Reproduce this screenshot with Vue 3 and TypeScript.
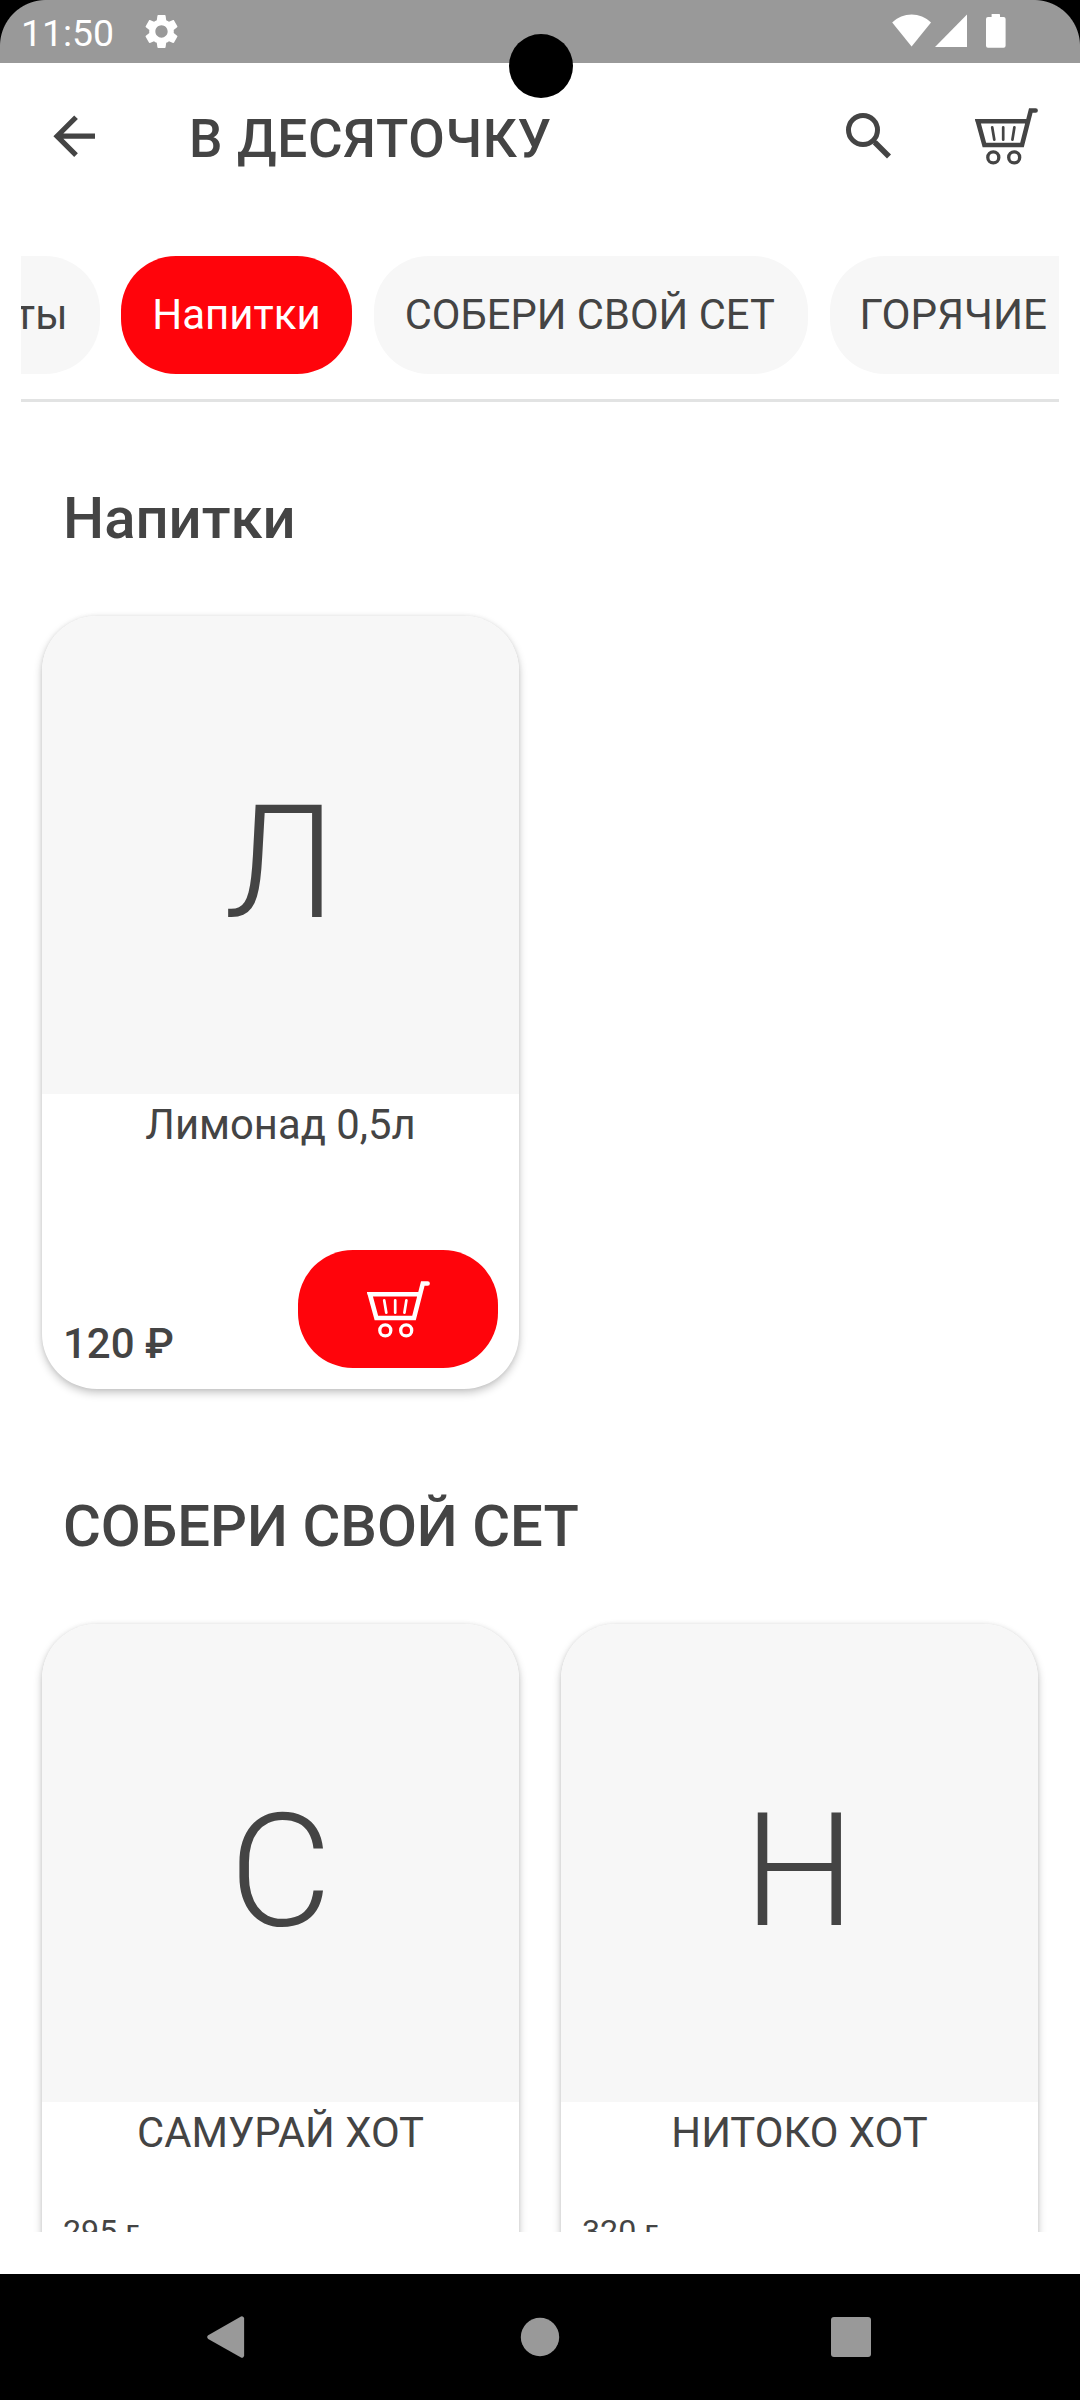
<script setup lang="ts">
import { h, type FunctionalComponent } from 'vue'

interface Chip {
  label: string
  kind: 'tail' | 'active' | 'plain' | 'head'
}

interface Product {
  letter: string
  name: string
  weight?: string
  price: string
}

interface Section {
  title: string
  products: Product[]
}

const chips: Chip[] = [
  { label: 'ты', kind: 'tail' },
  { label: 'Напитки', kind: 'active' },
  { label: 'СОБЕРИ СВОЙ СЕТ', kind: 'plain' },
  { label: 'ГОРЯЧИЕ', kind: 'head' },
]

const sections: Section[] = [
  {
    title: 'Напитки',
    products: [{ letter: 'Л', name: 'Лимонад 0,5л', price: '120 ₽' }],
  },
  {
    title: 'СОБЕРИ СВОЙ СЕТ',
    products: [
      { letter: 'С', name: 'САМУРАЙ ХОТ', weight: '295 г', price: '' },
      { letter: 'Н', name: 'НИТОКО ХОТ', weight: '320 г', price: '' },
    ],
  },
]

const CartIcon: FunctionalComponent = () =>
  h(
    'svg',
    { width: 66, height: 60, viewBox: '0 0 66 60', fill: 'none', stroke: 'currentColor' },
    [
      h('path', {
        d: 'M62.6 4.5H57.8L49 39H11.4L4.9 15.2H54.5',
        'stroke-width': 4.6,
        'stroke-linecap': 'round',
      }),
      h('path', {
        d: 'M2.1 12.9H8L7 17H3.2Z',
        fill: 'currentColor',
        stroke: 'none',
      }),
      h('path', {
        d: 'M19.2 21.3L21.3 33.7M30.2 21.3V33.7M41.4 21.3L39.4 33.7',
        'stroke-width': 2.7,
        'stroke-linecap': 'round',
      }),
      h('circle', { cx: 20.3, cy: 51.4, r: 5.5, 'stroke-width': 3.3 }),
      h('circle', { cx: 41.2, cy: 51.4, r: 5.5, 'stroke-width': 3.3 }),
    ],
  )
</script>

<template>
  <div class="screen">
    <div class="status">
      <span class="clock">11:50</span>
      <svg class="gear" width="41" height="41" viewBox="0 0 24 24" fill="#fff">
        <path
          d="M19.14 12.94c.04-.3.06-.61.06-.94 0-.32-.02-.64-.07-.94l2.03-1.58c.18-.14.23-.41.12-.61l-1.92-3.32c-.12-.22-.37-.29-.59-.22l-2.39.96c-.5-.38-1.03-.7-1.62-.94l-.36-2.54c-.04-.24-.24-.41-.48-.41h-3.84c-.24 0-.43.17-.47.41l-.36 2.54c-.59.24-1.13.57-1.62.94l-2.39-.96c-.22-.08-.47 0-.59.22L2.74 8.87c-.12.21-.08.47.12.61l2.03 1.58c-.05.3-.09.63-.09.94s.02.64.07.94l-2.03 1.58c-.18.14-.23.41-.12.61l1.92 3.32c.12.22.37.29.59.22l2.39-.96c.5.38 1.03.7 1.62.94l.36 2.54c.05.24.24.41.48.41h3.84c.24 0 .44-.17.47-.41l.36-2.54c.59-.24 1.13-.56 1.62-.94l2.39.96c.22.08.47 0 .59-.22l1.92-3.32c.12-.22.07-.47-.12-.61l-2.01-1.58zM12 15.6c-1.98 0-3.6-1.62-3.6-3.6s1.62-3.6 3.6-3.6 3.6 1.62 3.6 3.6-1.62 3.6-3.6 3.6z"
        />
      </svg>
      <svg class="signals" width="116" height="36" viewBox="0 0 116 36" fill="#fff">
        <path d="M0.2 9.6C10.8 -1.3 28.4 -1.3 39 9.6L19.6 33.6Z" />
        <path d="M43 33.9L75 1.4V33.9Z" />
        <path
          d="M99.6 1H107.2a.8.8 0 0 1 .8.8V4H111.6a2 2 0 0 1 2 2V32.8a2 2 0 0 1-2 2H96a2 2 0 0 1-2-2V6a2 2 0 0 1 2-2H99.600V1.800Z"
        />
      </svg>
    </div>

    <header class="appbar">
      <svg class="back" width="62.400" height="62.400" viewBox="0 0 24 24" fill="currentColor">
        <path d="M20 11H7.83l5.59-5.59L12 4l-8 8 8 8 1.41-1.41L7.83 13H20v-2z" />
      </svg>
      <h1 class="title">В ДЕСЯТОЧКУ</h1>
      <svg class="search" width="48" height="48" viewBox="0 0 48 48" fill="none" stroke="currentColor">
        <circle cx="19" cy="19" r="14.500" stroke-width="5" />
        <path d="M30.700 31.200L45 45.500" stroke-width="5.600" />
        <path d="M28.500 28.500L32 32" stroke-width="3.500" />
      </svg>
      <CartIcon class="cart" />
    </header>

    <nav class="chips">
      <div v-for="chip in chips" :key="chip.label" class="chip" :class="chip.kind">
        <span>{{ chip.label }}</span>
      </div>
    </nav>

    <main class="list">
      <section v-for="section in sections" :key="section.title" class="section">
        <h2 class="heading">{{ section.title }}</h2>
        <div class="grid">
          <article v-for="product in section.products" :key="product.name" class="card">
            <div class="thumb">{{ product.letter }}</div>
            <div class="name">{{ product.name }}</div>
            <div v-if="product.weight" class="weight">{{ product.weight }}</div>
            <div v-else class="buy">
              <span class="price">{{ product.price }}</span>
              <button class="add"><CartIcon /></button>
            </div>
          </article>
        </div>
      </section>
    </main>

    <footer class="navbar">
      <svg width="1080" height="126" viewBox="0 0 1080 126" fill="#999">
        <path d="M241 42.500L208.200 61.200a2.200 2.200 0 0 0 0 3.700L241 83.600a2.200 2.200 0 0 0 3.100-2V44.500a2.200 2.200 0 0 0-3.100-2Z" />
        <circle cx="540" cy="63" r="19.200" />
        <rect x="831" y="43" width="40" height="40" rx="3" />
      </svg>
    </footer>

    <div class="camera"></div>
  </div>
</template>

<style>
body {
  background: #000;
}
</style>

<style scoped>
.screen {
  position: relative;
  width: 1080px;
  height: 2400px;
  display: flex;
  flex-direction: column;
  overflow: hidden;
  background: #fff;
  color: #444;
  font-family: Roboto, "Liberation Sans", sans-serif;
}

.status {
  flex: none;
  height: 63px;
  display: flex;
  align-items: flex-start;
  background: radial-gradient(circle at 46px 46px, #999 45.500px, #000 46.500px) 0 0 / 46px 46px no-repeat,
    radial-gradient(circle at 0 46px, #999 45.500px, #000 46.500px) 100% 0 / 46px 46px no-repeat,
    #999;
  color: #fff;
}

.clock {
  width: 119.500px;
  margin-left: 21px;
  font-size: 37.400px;
  line-height: 66px;
}

.gear {
  margin-top: 11px;
}

.signals {
  margin-left: auto;
  margin-right: 72px;
  margin-top: 13px;
}

.appbar {
  flex: none;
  height: 193px;
  box-sizing: border-box;
  padding: 42px 41px 0 42.500px;
  display: flex;
  align-items: flex-start;
}

.title {
  margin: 1px auto 0 84px;
  font-size: 53px;
  font-weight: 500;
  line-height: 66px;
  letter-spacing: 0.700px;
}

.search {
  margin-top: 6px;
  margin-right: 81px;
}

.cart {
  margin-top: 1px;
}

.chips {
  flex: none;
  height: 146px;
  box-sizing: border-box;
  margin: 0 21px;
  border-bottom: 3px solid #e2e3e3;
  display: flex;
  gap: 21.500px;
  overflow: hidden;
  white-space: nowrap;
}

.chip {
  flex: none;
  height: 118px;
  box-sizing: border-box;
  border-radius: 55px;
  background: #f7f7f7;
  font-size: 41.700px;
  line-height: 117px;
  text-align: center;
}

.chip.tail {
  width: 78.500px;
  padding: 0 32px 0 0;
  display: flex;
  justify-content: flex-end;
  overflow: hidden;
  border-radius: 0 55px 55px 0;
}

.chip.active {
  width: 231px;
  background: #ff040b;
  color: #fff;
  font-size: 42px;
}

.chip.plain {
  width: 434.500px;
  padding-right: 2px;
}

.chip.head {
  flex: 1;
  padding-left: 30px;
  text-align: left;
  font-size: 42.200px;
  border-radius: 55px 0 0 55px;
}

.list {
  flex: none;
  height: 1830px;
  overflow: hidden;
}

.section {
  height: 1008px;
}

.heading {
  margin: 0;
  height: 214px;
  padding: 82px 0 0 63px;
  box-sizing: border-box;
  font-size: 58px;
  font-weight: 500;
  line-height: 68px;
}

.grid {
  display: flex;
  gap: 42px;
  padding: 0 42px;
}

.card {
  width: 477px;
  height: 773px;
  display: flex;
  flex-direction: column;
  border-radius: 55px;
  background: #fff;
  box-shadow: 0 4px 9px rgba(0, 0, 0, 0.22), 0 0 4px rgba(0, 0, 0, 0.08);
}

.thumb {
  flex: none;
  height: 478px;
  border-radius: 55px 55px 0 0;
  background: #f7f7f7;
  font-size: 158px;
  font-weight: 300;
  line-height: 495px;
  text-align: center;
}

.name {
  flex: none;
  height: 60px;
  font-size: 41.800px;
  line-height: 61px;
  text-align: center;
}

.weight {
  margin: 49px 0 0 21px;
  font-size: 32.200px;
  line-height: 40px;
}

.buy {
  flex: 1;
  display: flex;
  justify-content: space-between;
  align-items: flex-end;
  padding: 0 21px 21px;
}

.price {
  font-size: 42px;
  font-weight: 500;
  line-height: 48px;
}

.add {
  width: 200px;
  height: 118px;
  padding: 0;
  border: 0;
  border-radius: 55px;
  background: #ff040b;
  color: #fff;
  display: flex;
  align-items: center;
  justify-content: center;
}

.navbar {
  height: 126px;
  margin-top: auto;
  background: #000;
}

.navbar svg {
  display: block;
}

.camera {
  position: absolute;
  left: 509px;
  top: 34px;
  width: 64px;
  height: 64px;
  border-radius: 50%;
  background: #000;
}
</style>
